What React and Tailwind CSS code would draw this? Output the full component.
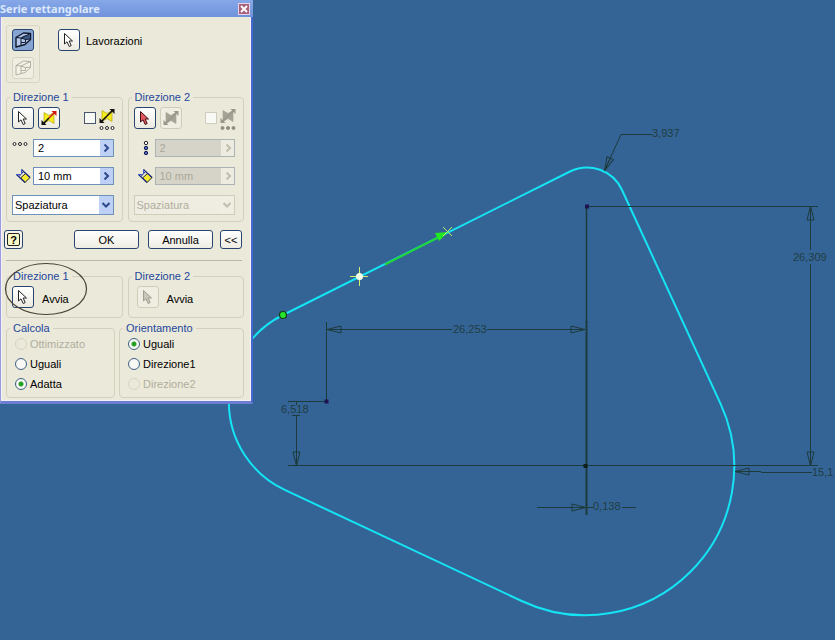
import { useState } from 'react'

const toolButton =
  'flex h-[22px] w-[22px] shrink-0 items-center justify-center rounded-[3px] border border-[#27456f] bg-gradient-to-b from-white to-[#eceae0] disabled:border-[#cfccba] disabled:bg-none disabled:bg-[#f0eee3]'

const CursorIcon = ({ fill = '#fff', stroke = '#222' }) => (
  <svg className="h-4 w-4" viewBox="0 0 16 16" aria-hidden="true">
    <path d="M3.500 1.500V12l2.500-2.200L8.200 14.500l2-.9L8.200 9H11.500z" fill={fill} stroke={stroke} strokeLinejoin="round" />
  </svg>
)

const FeatureIcon = ({ disabled }) => {
  const line = disabled ? '#b3b09f' : '#10182c'
  return (
    <svg className="h-5 w-5 shrink-0" viewBox="0 0 20 20" fill="none" stroke={line} strokeLinejoin="round" aria-hidden="true">
      <path
        d="M3 7.500L10.500 3 17.500 3.500V9.500L12 14.500 3 17z"
        fill={disabled ? '#f4f2e8' : '#b4c8ea'}
        strokeWidth={disabled ? 1 : 1.400}
      />
      {!disabled && <path d="M9.500 6L17 4.500V9L12.500 9.500 9.500 8.500z" fill="#3c5686" stroke="none" />}
      <path d="M3 7.500L8 8 17.500 3.500M8 8v7.500M8 8l4.500 1.500L17.500 9M12.500 9.500v3L8 12.500" />
    </svg>
  )
}

const FlipIcon = ({ disabled, dark }) => {
  const line = disabled ? '#99978a' : '#111'
  const tip = disabled || dark ? line : '#d01818'
  return (
    <svg className="h-[18px] w-[18px] shrink-0" viewBox="0 0 18 18" aria-hidden="true">
      <path d="M4 3.500l5 3L14 3.500v11l-5-3L4 14.500z" fill={disabled ? '#a5a396' : '#f4ec1c'} stroke={disabled ? '#a5a396' : '#b8a510'} strokeWidth="0.700" />
      <path d="M9 9l5.500-5.500" stroke={tip} strokeWidth="1.600" />
      <path d="M11.500 2h5v5z" fill={tip} />
      <path d="M9 9l-5.500 5.500" stroke={line} strokeWidth="1.600" />
      <path d="M1.500 11V16h5z" fill={line} />
    </svg>
  )
}

const CountIcon = ({ vertical, filled }) => (
  <svg
    className={vertical ? 'h-4 w-4 shrink-0' : 'h-[6px] w-4 shrink-0'}
    viewBox={vertical ? '0 0 16 16' : '0 0 16 6'}
    stroke={filled ? '#8f8d80' : '#222'}
    fill={filled ? '#8f8d80' : '#fff'}
    aria-hidden="true"
  >
    {vertical ? (
      <>
        <circle cx="9" cy="3" r="1.700" />
        <circle cx="9" cy="8" r="1.700" fill="#5068c0" stroke="#101850" />
        <circle cx="9" cy="13" r="1.700" fill="#5068c0" stroke="#101850" />
      </>
    ) : (
      <>
        <circle cx="2.500" cy="3" r="1.500" />
        <circle cx="8" cy="3" r="1.500" />
        <circle cx="13.500" cy="3" r="1.500" />
      </>
    )}
  </svg>
)

const SpacingIcon = () => (
  <svg className="h-4 w-4 shrink-0" viewBox="0 0 16 16" aria-hidden="true">
    <path d="M10.500 5.500l4.500 4-5 5L5.500 10z" fill="#f3ea30" stroke="#222" />
    <path d="M1.500 6.500l8.500 8M6.500 1.500l8.500 8" stroke="#1a2a80" strokeWidth="1.200" />
    <path d="M4 8.500l4.500-5" stroke="#1a2a80" />
    <path d="M1 6.500h4M6.500 1.500v4" stroke="#3a58c8" />
  </svg>
)

const Chevron = ({ down, disabled }) => (
  <svg className="h-2 w-2" viewBox="0 0 8 8" fill="none" stroke={disabled ? '#c0bead' : '#2c4a8c'} strokeWidth="2" aria-hidden="true">
    <path d={down ? 'M0.500 2L4 5.500 7.500 2' : 'M2.500 0.500L6 4 2.500 7.500'} />
  </svg>
)

const Stepper = ({ label, value, disabled }) => (
  <div className={`flex h-[18px] min-w-0 flex-1 border ${disabled ? 'border-[#adb2b4] bg-[#d6d4c8]' : 'border-[#6f90b8] bg-white'}`}>
    <input
      type="text"
      aria-label={label}
      defaultValue={value}
      disabled={disabled}
      className="w-0 min-w-0 flex-1 bg-transparent px-1 text-[11px] leading-4 text-black outline-none disabled:text-[#a9a798]"
    />
    <button
      type="button"
      aria-label={`${label}: opzioni`}
      disabled={disabled}
      className="flex w-[13px] items-center justify-center bg-[#bfd0f7] disabled:bg-[#eeece1]"
    >
      <Chevron disabled={disabled} />
    </button>
  </div>
)

const Group = ({ title, className = '', bodyClass = '', children }) => (
  <fieldset className={`min-w-0 rounded-[4px] border border-[#d3d0bd] ${className}`}>
    <legend className="ml-[3px] px-[3px] leading-3 text-[#24479c]">{title}</legend>
    <div className={bodyClass}>{children}</div>
  </fieldset>
)

const Direction = ({ number, disabled }) => (
  <Group title={`Direzione ${number}`} className="flex-1" bodyClass="pt-1 pr-2 pb-[6px] pl-[5px]">
    <div className="flex items-start">
      <button type="button" aria-label="Percorso" className={toolButton}>
        {disabled ? <CursorIcon fill="#e0565c" stroke="#401018" /> : <CursorIcon />}
      </button>
      <button type="button" aria-label="Inverti" disabled={disabled} className={`${toolButton} ml-1`}>
        <FlipIcon disabled={disabled} />
      </button>
      <input
        type="checkbox"
        aria-label="Piano intermedio"
        disabled={disabled}
        className="mt-[5px] ml-auto h-3 w-3 appearance-none border border-[#47566b] bg-[#f8f8f4] checked:bg-[#2fa52f] disabled:border-[#d0cdbc]"
      />
      <div className="-mr-[2px] ml-[2px] flex flex-col items-center">
        <FlipIcon disabled={disabled} dark />
        <CountIcon filled={disabled} />
      </div>
    </div>
    <div className="mt-2 flex items-center">
      <span className={disabled ? 'flex w-[21px] justify-end pr-[2px]' : 'mb-2 flex w-[21px]'}>
        <CountIcon vertical={disabled} />
      </span>
      <Stepper label="Numero" value="2" disabled={disabled} />
    </div>
    <div className="mt-[10px] flex items-center">
      <span className="flex w-[21px] justify-end pr-[2px]">
        <SpacingIcon />
      </span>
      <Stepper label="Distanza" value="10 mm" disabled={disabled} />
    </div>
    <div className="relative mt-[10px]">
      <select
        aria-label="Tipo"
        disabled={disabled}
        className="block h-5 w-full appearance-none border border-[#6f90b8] bg-white px-[2px] text-[11px] text-black opacity-100 disabled:border-[#cfccba] disabled:bg-[#efede2] disabled:text-[#b0ae9e]"
      >
        <option>Spaziatura</option>
        <option>Distanza</option>
      </select>
      <span className={`pointer-events-none absolute inset-y-px right-px flex w-[14px] items-center justify-center ${disabled ? 'bg-[#f0eee3]' : 'bg-[#bfd0f7]'}`}>
        <Chevron down disabled={disabled} />
      </span>
    </div>
  </Group>
)

const RadioList = ({ name, options, value, onChange }) => (
  <div className="flex flex-col pl-2">
    {options.map((o) => (
      <label key={o.label} className={`flex h-5 items-center gap-[3px] ${o.disabled ? 'text-[#b0ae9e]' : 'text-black'}`}>
        <input
          type="radio"
          name={name}
          disabled={o.disabled}
          checked={value === o.label}
          onChange={() => onChange(o.label)}
          className="h-3 w-3 appearance-none rounded-full border border-[#3f6084] bg-[#f8f8f4] checked:bg-[radial-gradient(circle,#25a025_2px,transparent_3px)] disabled:border-[#d6d3c2] disabled:bg-transparent"
        />
        {o.label}
      </label>
    ))}
  </div>
)

const PatternDialog = () => {
  const [compute, setCompute] = useState('Adatta')
  const [orientation, setOrientation] = useState('Uguali')
  const textButton =
    'h-[19px] rounded-[3px] border border-[#27456f] bg-gradient-to-b from-white to-[#eeece2] text-center text-[11px] leading-4 text-black'

  return (
    <section className="relative w-[253px] bg-[#ebe9d9] font-['Liberation_Sans',Arial,sans-serif] text-[11px]">
      <header className="flex h-[17px] items-center justify-between bg-gradient-to-b from-[#86a8e8] to-[#6f92dc] pr-[3px]">
        <h1 className="font-['Noto_Sans',Verdana,sans-serif] text-[11px] leading-4 font-bold text-[#dce8fb]">Serie rettangolare</h1>
        <button type="button" aria-label="Chiudi" className="flex h-3 w-3 items-center justify-center border border-[#e4d4ea] bg-[#a8627c]">
          <svg className="h-2 w-2" viewBox="0 0 8 8" stroke="#fff" strokeWidth="1.800" aria-hidden="true">
            <path d="M1 1l6 6M7 1L1 7" />
          </svg>
        </button>
      </header>

      <div className="border-r-2 border-b-[3px] border-l border-r-[#4568cc] border-b-[#6c7ed0] border-l-[#9a9ce0]">
        <div className="border-r border-b border-l border-[#f6effa] pt-2 pr-[6px] pb-[2px] pl-1">
          <div className="flex items-start">
            <div className="flex h-[58px] flex-col gap-[6px] rounded-[3px] border border-[#d8d5c3] px-[5px] pt-[3px]">
              <button type="button" aria-label="Singole lavorazioni" className="flex h-[22px] w-[22px] items-center justify-center rounded-[3px] border border-[#27456f] bg-[#86a3d2]">
                <FeatureIcon />
              </button>
              <button type="button" aria-label="Intero solido" className="flex h-[22px] w-[22px] items-center justify-center rounded-[3px] border border-[#d6d3c2] bg-[#f0eee3]">
                <FeatureIcon disabled />
              </button>
            </div>
            <label className="mt-1 ml-[18px] flex items-center gap-[6px] text-black">
              <button type="button" className={toolButton}>
                <CursorIcon />
              </button>
              <span className="mt-[2px]">Lavorazioni</span>
            </label>
          </div>

          <div className="mt-2 flex gap-[5px]">
            <Direction number={1} />
            <Direction number={2} disabled />
          </div>

          <div className="mt-2 mr-[2px] flex items-center">
            <button type="button" aria-label="Guida" className="-ml-[2px] flex h-[19px] w-[19px] items-center justify-center rounded-[3px] border border-[#27456f] bg-[#f6f4ea]">
              <span className="flex h-[13px] w-[13px] items-center justify-center rounded-[2px] border border-[#222] bg-[#fbf9c8] text-[11px] leading-3 font-bold text-black">?</span>
            </button>
            <button type="button" className={`${textButton} ml-auto w-[65px]`}>OK</button>
            <button type="button" className={`${textButton} ml-[9px] w-[65px]`}>Annulla</button>
            <button type="button" className={`${textButton} ml-[7px] w-[22px]`}>&lt;&lt;</button>
          </div>

          <hr className="mt-[11px] mr-[2px] border-[#bab8a8]" />

          <div className="relative mt-[9px] flex gap-[5px]">
            <Group title="Direzione 1" className="flex-1" bodyClass="pt-1 pb-[9px] pl-[5px]">
              <label className="flex items-center gap-2 text-black">
                <button type="button" className={toolButton}>
                  <CursorIcon />
                </button>
                <span className="mt-1">Avvia</span>
              </label>
            </Group>
            <Group title="Direzione 2" className="flex-1" bodyClass="pt-1 pb-[9px] pl-2">
              <label className="flex items-center gap-2 text-black">
                <button type="button" disabled className={toolButton}>
                  <CursorIcon fill="#c9c6b8" stroke="#a09e90" />
                </button>
                <span className="mt-1">Avvia</span>
              </label>
            </Group>
            <svg className="pointer-events-none absolute -top-2 -left-1 h-[54px] w-[86px]" viewBox="0 0 86 54" fill="none" aria-hidden="true">
              <ellipse cx="44" cy="27" rx="40.500" ry="25.500" stroke="#4a4436" strokeWidth="1.200" />
            </svg>
          </div>

          <div className="mt-1 flex gap-1">
            <Group title="Calcola" className="w-[109px]" bodyClass="pb-[3px]">
              <RadioList
                name="calcola"
                value={compute}
                onChange={setCompute}
                options={[{ label: 'Ottimizzato', disabled: true }, { label: 'Uguali' }, { label: 'Adatta' }]}
              />
            </Group>
            <Group title="Orientamento" className="flex-1" bodyClass="pb-[3px]">
              <RadioList
                name="orientamento"
                value={orientation}
                onChange={setOrientation}
                options={[{ label: 'Uguali' }, { label: 'Direzione1' }, { label: 'Direzione2', disabled: true }]}
              />
            </Group>
          </div>
        </div>
      </div>
    </section>
  )
}

const Arrow = ({ x, y, angle }) => (
  <path d="M0 0l-14-3.500v7z M-14 0H0" transform={`translate(${x} ${y}) rotate(${angle})`} />
)

const Sketch = () => (
  <svg className="absolute inset-0 h-full w-full" viewBox="0 0 835 640" preserveAspectRatio="xMinYMin slice" fill="none">
    {/* Profile */}
    <path
      d="M283 315L570 171.500A38.500 38.500 0 0 1 622 190L720.500 403.700A149 149 0 0 1 521.700 601L284.800 489.900A97 97 0 0 1 283 315z"
      stroke="#14e4f4"
      strokeWidth="2"
    />

    {/* Dimensions */}
    <g stroke="#1d3a3c">
      <path d="M326.500 322v80M288 401.500h38M328 329.500h124M487 329.500h98" />
      <path d="M296.500 402v3M292 415.500h8M296.500 415v50M288 465.500h530" />
      <path d="M587 206.500h231M810.500 208v42M810.500 264v201" />
      <path d="M537 507.500h56M622 507.500h14" />
      <path d="M652 134.500h-31l-16 35" />
      <path d="M736 471.500h24l2 1h50" />
      <path d="M586.500 206v116" strokeWidth="1.500" />
      <path d="M586.500 321v194" strokeWidth="2" />
      <Arrow x={327} y={329.5} angle={180} />
      <Arrow x={585} y={329.5} angle={0} />
      <Arrow x={296.5} y={466} angle={90} />
      <Arrow x={810.5} y={206} angle={-90} />
      <Arrow x={810.5} y={466} angle={90} />
      <Arrow x={586} y={507.5} angle={0} />
      <Arrow x={604.5} y={171} angle={114} />
      <Arrow x={735} y={471.5} angle={180} />
    </g>
    <g className="font-['Liberation_Sans',Arial,sans-serif] text-[11px]" fill="#1f3d42">
      <text x="652" y="137">3,937</text>
      <text x="793" y="261">26,309</text>
      <text x="453" y="333">26,253</text>
      <text x="281" y="413">6,518</text>
      <text x="593" y="510">0,138</text>
      <text x="812" y="476">15,1</text>
    </g>
    <g fill="#1d1450">
      <path d="M585 204.500h4v4h-4zM324.500 399.500h4v4h-4z" />
      <path d="M583.500 464h4v4h-4z" fill="#10201f" />
    </g>

    {/* Direction arrow */}
    <path d="M385 264.500L440 236.500" stroke="#1fd436" strokeWidth="2" />
    <path d="M448 232l-13 1 4 8z" fill="#22e822" />
    <path d="M443 227l9 9M452 227l-9 9" stroke="#b8f060" />
    <path d="M350 276.500h18M359.500 267v19" stroke="#d4f06a" />
    <circle cx="359.500" cy="276.500" r="3.500" fill="#f2ffe8" />
    <circle cx="283" cy="315" r="3.500" fill="#28e428" stroke="#123c1c" strokeWidth="1.200" />
  </svg>
)

export default function App() {
  return (
    <main className="relative min-h-screen w-full overflow-hidden bg-[#346496]">
      <Sketch />
      <PatternDialog />
    </main>
  )
}
